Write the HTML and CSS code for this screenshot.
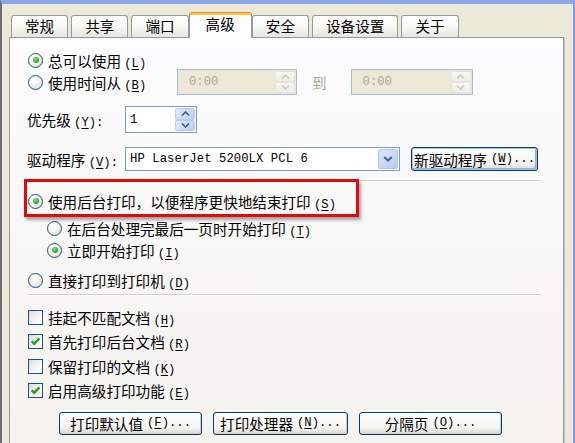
FILE: index.html
```html
<!DOCTYPE html>
<html lang="zh-CN">
<head>
<meta charset="utf-8">
<title>打印机属性 - 高级</title>
<link rel="stylesheet" href="styles.css">
</head>
<body>
<div class="window">
  <div class="tabs">
    <div class="tab">常规</div>
    <div class="tab">共享</div>
    <div class="tab">端口</div>
    <div class="tab active">高级</div>
    <div class="tab">安全</div>
    <div class="tab">设备设置</div>
    <div class="tab">关于</div>
  </div>
  <div class="panel">
    <div class="row row-always">
      <span class="radio checked"></span>
      <span class="label">总可以使用 <span class="mn">(<u>L</u>)</span></span>
    </div>
    <div class="row row-time">
      <div class="time-choice">
        <span class="radio"></span>
        <span class="label">使用时间从 <span class="mn">(<u>B</u>)</span></span>
      </div>
      <div class="field time-field disabled">
        <span class="value mono">0:00</span>
        <span class="spin spin-disabled">
          <span class="spin-btn"><svg width="9" height="5" viewBox="0 0 9 5"><path d="M1 4.5 L4.5 1 L8 4.5" fill="none" stroke="#C9C7BA" stroke-width="1.5"/></svg></span>
          <span class="spin-btn"><svg width="9" height="5" viewBox="0 0 9 5"><path d="M1 0.5 L4.5 4 L8 0.5" fill="none" stroke="#C9C7BA" stroke-width="1.5"/></svg></span>
        </span>
      </div>
      <span class="to">到</span>
      <div class="field time-field time-field-2 disabled">
        <span class="value mono">0:00</span>
        <span class="spin spin-disabled">
          <span class="spin-btn"><svg width="9" height="5" viewBox="0 0 9 5"><path d="M1 4.5 L4.5 1 L8 4.5" fill="none" stroke="#C9C7BA" stroke-width="1.5"/></svg></span>
          <span class="spin-btn"><svg width="9" height="5" viewBox="0 0 9 5"><path d="M1 0.5 L4.5 4 L8 0.5" fill="none" stroke="#C9C7BA" stroke-width="1.5"/></svg></span>
        </span>
      </div>
    </div>
    <div class="row row-priority">
      <span class="field-label">优先级 <span class="mn">(<u>Y</u>):</span></span>
      <div class="field priority-field">
        <span class="value mono">1</span>
        <span class="spin">
          <span class="spin-btn"><svg width="9" height="5" viewBox="0 0 9 5"><path d="M1 4.5 L4.5 1 L8 4.5" fill="none" stroke="#4D6185" stroke-width="1.7"/></svg></span>
          <span class="spin-btn"><svg width="9" height="5" viewBox="0 0 9 5"><path d="M1 0.5 L4.5 4 L8 0.5" fill="none" stroke="#4D6185" stroke-width="1.7"/></svg></span>
        </span>
      </div>
    </div>
    <div class="row row-driver">
      <span class="field-label">驱动程序 <span class="mn">(<u>V</u>):</span></span>
      <div class="field combo">
        <span class="value mono">HP LaserJet 5200LX PCL 6</span>
        <span class="combo-btn"><svg width="10" height="6" viewBox="0 0 10 6"><path d="M1.2 1 L5 4.6 L8.8 1" fill="none" stroke="#4D6185" stroke-width="2"/></svg></span>
      </div>
      <div class="btn btn-default btn-newdriver">新驱动程序 <span class="mn">(<u>W</u>)...</span></div>
    </div>
    <div class="sep sep-1"></div>
    <div class="row row-spool">
      <span class="radio checked"></span>
      <span class="label">使用后台打印，以便程序更快地结束打印 <span class="mn">(<u>S</u>)</span></span>
    </div>
    <div class="row row-sub row-afterlast">
      <span class="radio"></span>
      <span class="label">在后台处理完最后一页时开始打印 <span class="mn">(<u>T</u>)</span></span>
    </div>
    <div class="row row-sub row-immediate">
      <span class="radio checked"></span>
      <span class="label">立即开始打印 <span class="mn">(<u>I</u>)</span></span>
    </div>
    <div class="row row-direct">
      <span class="radio"></span>
      <span class="label">直接打印到打印机 <span class="mn">(<u>D</u>)</span></span>
    </div>
    <div class="sep sep-2"></div>
    <div class="checks">
      <div class="row chk">
        <span class="checkbox"></span>
        <span class="label">挂起不匹配文档 <span class="mn">(<u>H</u>)</span></span>
      </div>
      <div class="row chk">
        <span class="checkbox checked"><svg width="13" height="13" viewBox="0 0 13 13"><path d="M2.6 6.2 L5.2 8.9 L10.4 3.4" fill="none" stroke="#21A121" stroke-width="2.3"/></svg></span>
        <span class="label">首先打印后台文档 <span class="mn">(<u>R</u>)</span></span>
      </div>
      <div class="row chk">
        <span class="checkbox"></span>
        <span class="label">保留打印的文档 <span class="mn">(<u>K</u>)</span></span>
      </div>
      <div class="row chk">
        <span class="checkbox checked"><svg width="13" height="13" viewBox="0 0 13 13"><path d="M2.6 6.2 L5.2 8.9 L10.4 3.4" fill="none" stroke="#21A121" stroke-width="2.3"/></svg></span>
        <span class="label">启用高级打印功能 <span class="mn">(<u>E</u>)</span></span>
      </div>
    </div>
    <div class="btn-row">
      <div class="btn btn-defaults">打印默认值 <span class="mn">(<u>F</u>)...</span></div>
      <div class="btn btn-processor">打印处理器 <span class="mn">(<u>N</u>)...</span></div>
      <div class="btn btn-separator">分隔页 <span class="mn">(<u>O</u>)...</span></div>
    </div>
    <div class="highlight"></div>
  </div>
</div>
</body>
</html>
```

FILE: styles.css
```css
* { box-sizing: border-box; margin: 0; padding: 0; }
html, body { width: 575px; height: 443px; overflow: hidden; }
body {
  background: #ECE9D8;
  font-family: "Noto Sans CJK SC", "Noto Sans", sans-serif;
  font-size: 14.6px;
  color: #000;
}
.mn, .mono {
  font-family: "Liberation Mono", "DejaVu Sans Mono", monospace;
  font-size: 12.2px;
}
.mn u { text-underline-offset: 2px; }

.window {
  height: 443px;
  border-top: 4px solid #8DA6E9;
  border-left: 2px solid #6E6E78;
  border-right: 2px solid #8198E4;
  padding: 8px 9px 0 7px;
  display: flex;
  flex-direction: column;
}

/* tabs */
.tabs {
  display: flex;
  align-items: flex-end;
  gap: 3px;
  height: 26px;
  padding-left: 2px;
  margin-bottom: -1px;
  position: relative;
  z-index: 2;
}
.tab {
  height: 22px;
  margin-bottom: 1px;
  padding: 0 13px;
  border: 1px solid #919B9C;
  border-bottom: none;
  border-radius: 3px 3px 0 0;
  background: linear-gradient(#FFFFFF, #F7F7F3 55%, #E6E4DB);
  line-height: 20px;
  white-space: nowrap;
}
.tab.active {
  height: 26px;
  margin: 0 -3px;
  padding: 0 16px;
  border-top: 1px solid #E68B2C;
  background: #FCFCFE;
  box-shadow: inset 0 2px 0 #FFC83C;
  line-height: 22px;
}

/* panel */
.panel {
  flex: 1;
  position: relative;
  border: 1px solid #919B9C;
  border-bottom: none;
  box-shadow: 1px 0 0 #C8C6B8;
  background: linear-gradient(#FCFCFE, #F4F3EE);
  padding: 13px 22px 0 18px;
}

.row {
  display: flex;
  align-items: center;
  white-space: nowrap;
}
.row .label { margin-left: 5px; }

.row-always { height: 18px; }
.row-time { height: 26px; }
.time-choice { display: flex; align-items: center; width: 149px; }

.field {
  display: flex;
  align-items: stretch;
  border: 1px solid #7F9DB9;
  background: #FFFFFF;
}
.field .value {
  flex: 1;
  display: flex;
  align-items: center;
  padding-left: 4px;
}
.time-field { width: 120px; height: 26px; }
.time-field .value { padding-left: 11px; }
.time-field-2 { width: 122px; margin-left: 24px; }
.field.disabled {
  background: #EBE8D8;
  border-color: #A8BAD6;
  color: #ACA899;
}
.to { margin-left: 15px; color: #ACA899; }

.spin {
  display: flex;
  flex-direction: column;
  width: 21px;
  padding: 1px 1px 1px 0;
  gap: 0;
}
.spin-btn {
  flex: 1;
  display: flex;
  align-items: center;
  justify-content: center;
  border: 1px solid #B7C9F3;
  border-radius: 2px;
  background: linear-gradient(135deg, #E1E9FD, #BCCFF8);
}
.spin-disabled .spin-btn {
  border-color: #E6E4DA;
  background: linear-gradient(#F8F7F3, #EEEDE6);
}

.row-priority { height: 27px; margin-top: 11px; }
.field-label { width: 98px; margin-left: -1px; }
.priority-field { width: 72px; height: 27px; }

.row-driver { height: 24px; margin-top: 14px; }
.combo { width: 275px; height: 24px; }
.combo .value { padding-left: 4px; letter-spacing: 0.1px; }
.combo-btn {
  width: 20px;
  margin: 1px;
  display: flex;
  align-items: center;
  justify-content: center;
  border: 1px solid #B1C5F4;
  border-radius: 2px;
  background: linear-gradient(135deg, #DCE6FD, #B6CAF6);
}

.btn {
  display: flex;
  align-items: center;
  justify-content: center;
  height: 23px;
  border: 1px solid #003C74;
  border-radius: 3px;
  background: linear-gradient(#FFFFFF, #F4F4F0 70%, #DCD8CC);
  box-shadow: inset -1px -1px 0 #D6D0C5;
  white-space: nowrap;
}
.btn .mn { margin-left: 4px; }
.btn-newdriver { width: 127px; height: 24px; margin-left: 11px; }
.btn-default { box-shadow: inset 0 0 0 1px #A9C2EC, inset -2px -2px 0 #8DAEE6; }

/* separators */
.sep {
  height: 2px;
  border-top: 1px solid #D0D0BF;
  border-bottom: 1px solid #FFFFFF;
}
.sep-1 { margin-top: 9px; }
.sep-2 { margin-top: 3px; }

.row-spool { height: 22px; margin-top: 8px; }
.row-sub { height: 22px; padding-left: 19px; }
.row-afterlast { margin-top: 5px; }
.row-direct { height: 22px; margin-top: 8px; }

/* radios */
.radio {
  flex: none;
  width: 15px;
  height: 15px;
  border-radius: 50%;
  border: 1px solid #1C5180;
  background: radial-gradient(circle at 35% 30%, #FFFFFF 20%, #E8E8E2 65%, #D2D2CA);
  display: flex;
  align-items: center;
  justify-content: center;
}
.radio.checked::after {
  content: "";
  width: 6px;
  height: 6px;
  border-radius: 50%;
  background: radial-gradient(circle at 40% 35%, #7EE27A, #21A121 70%);
}

/* checkboxes */
.checks { margin-top: 10px; display: flex; flex-direction: column; }
.chk { height: 22px; }
.chk + .chk { margin-top: 2.5px; }
.checkbox {
  flex: none;
  width: 15px;
  height: 15px;
  border: 1px solid #1C5180;
  background: linear-gradient(135deg, #DCDCD7, #FFFFFF 80%);
  display: flex;
  align-items: center;
  justify-content: center;
}

.btn-row {
  display: flex;
  gap: 11px;
  margin-top: 10px;
  padding-left: 31px;
}
.btn-defaults { width: 143px; }
.btn-processor { width: 135px; }
.btn-separator { width: 143px; }

/* red annotation box overlaid on the panel */
.highlight {
  position: absolute;
  left: 14px;
  top: 141px;
  width: 335px;
  height: 38px;
  border: 3px solid #E20A0A;
  box-shadow: 2px 3px 3px rgba(0, 0, 0, 0.35);
  pointer-events: none;
}
```
